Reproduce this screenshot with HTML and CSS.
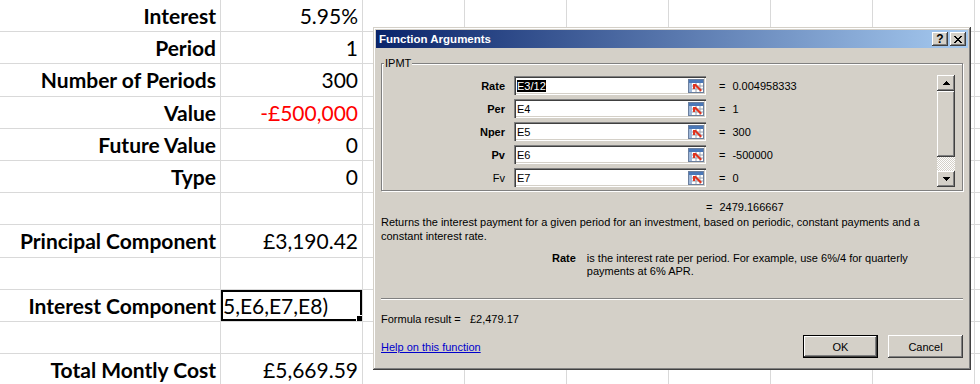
FILE: index.html
```html
<!DOCTYPE html>
<html lang="en">

<head>
  <meta charset="UTF-8">
  <title>IPMT - Function Arguments</title>
  <link rel="stylesheet" href="styles.css">
</head>

<body>
  <!-- Worksheet -->
  <div class="sheet">
    <div class="row"><div class="cell label">Interest</div><div class="cell value">5.95%</div><div class="rest"></div></div>
    <div class="row"><div class="cell label">Period</div><div class="cell value">1</div><div class="rest"></div></div>
    <div class="row"><div class="cell label">Number of Periods</div><div class="cell value">300</div><div class="rest"></div></div>
    <div class="row"><div class="cell label">Value</div><div class="cell value negative">-£500,000</div><div class="rest"></div></div>
    <div class="row"><div class="cell label">Future Value</div><div class="cell value">0</div><div class="rest"></div></div>
    <div class="row"><div class="cell label">Type</div><div class="cell value">0</div><div class="rest"></div></div>
    <div class="row"><div class="cell label"></div><div class="cell value"></div><div class="rest"></div></div>
    <div class="row"><div class="cell label">Principal Component</div><div class="cell value">£3,190.42</div><div class="rest"></div></div>
    <div class="row"><div class="cell label"></div><div class="cell value"></div><div class="rest"></div></div>
    <div class="row"><div class="cell label">Interest Component</div><div class="cell value active"><span class="editing">=IPMT(E3/12,E4,E5,E6,E7,E8)</span></div><div class="rest"></div></div>
    <div class="row"><div class="cell label"></div><div class="cell value"></div><div class="rest"></div></div>
    <div class="row"><div class="cell label">Total Montly Cost</div><div class="cell value">£5,669.59</div><div class="rest"></div></div>
  </div>

  <!-- Function Arguments window -->
  <div class="dialog">
    <div class="titlebar">
      <span class="title">Function Arguments</span>
      <div class="title-btns">
        <span class="tbtn help">?</span>
        <span class="tbtn">
          <svg width="8" height="7" viewBox="0 0 8 7"><path d="M0 0h2v1h1v1h2V1h1V0h2v1H7v1H6v1H5v1h1v1h1v1h1v1H6V6H5V5H3v1H2v1H0V6h1V5h1V4h1V3H2V2H1V1H0z" fill="#000"/></svg>
        </span>
      </div>
    </div>

    <div class="dlg-body">
      <fieldset class="group">
        <legend>IPMT</legend>
        <div class="args">
          <div class="arg-list">
            <div class="arg">
              <span class="arg-name req">Rate</span>
              <div class="field"><span class="field-text"><span class="sel">E3/12</span></span><span class="refbtn"><svg width="16" height="14" viewBox="0 0 16 14"><use href="#ref"/></svg></span></div>
              <span class="eq">=</span><span class="arg-val">0.004958333</span>
            </div>
            <div class="arg">
              <span class="arg-name req">Per</span>
              <div class="field"><span class="field-text">E4</span><span class="refbtn"><svg width="16" height="14" viewBox="0 0 16 14"><use href="#ref"/></svg></span></div>
              <span class="eq">=</span><span class="arg-val">1</span>
            </div>
            <div class="arg">
              <span class="arg-name req">Nper</span>
              <div class="field"><span class="field-text">E5</span><span class="refbtn"><svg width="16" height="14" viewBox="0 0 16 14"><use href="#ref"/></svg></span></div>
              <span class="eq">=</span><span class="arg-val">300</span>
            </div>
            <div class="arg">
              <span class="arg-name req">Pv</span>
              <div class="field"><span class="field-text">E6</span><span class="refbtn"><svg width="16" height="14" viewBox="0 0 16 14"><use href="#ref"/></svg></span></div>
              <span class="eq">=</span><span class="arg-val">-500000</span>
            </div>
            <div class="arg">
              <span class="arg-name">Fv</span>
              <div class="field"><span class="field-text">E7</span><span class="refbtn"><svg width="16" height="14" viewBox="0 0 16 14"><use href="#ref"/></svg></span></div>
              <span class="eq">=</span><span class="arg-val">0</span>
            </div>
          </div>
          <div class="vscroll">
            <span class="sbtn"><svg width="7" height="4" viewBox="0 0 7 4"><path d="M3 0h1v1h1v1h1v1h1v1H0V3h1V2h1V1h1z" fill="#000"/></svg></span>
            <span class="thumb"></span>
            <span class="track"></span>
            <span class="sbtn"><svg width="7" height="4" viewBox="0 0 7 4"><path d="M0 0h7v1H6v1H5v1H4v1H3V3H2V2H1V1H0z" fill="#000"/></svg></span>
          </div>
        </div>
      </fieldset>

      <div class="total"><span class="eq">=</span><span class="arg-val">2479.166667</span></div>

      <p class="desc">Returns the interest payment for a given period for an investment, based on periodic, constant payments and a constant interest rate.</p>

      <div class="argdesc">
        <b>Rate</b>
        <span>is the interest rate per period. For example, use 6%/4 for quarterly payments at 6% APR.</span>
      </div>

      <div class="sep"></div>

      <div class="formula">Formula result =&nbsp;&nbsp; £2,479.17</div>

      <div class="dlg-foot">
        <a href="#" class="help-link">Help on this function</a>
        <div class="dlg-btns">
          <button class="btn default">OK</button>
          <button class="btn">Cancel</button>
        </div>
      </div>
    </div>
  </div>

  <!-- collapse-dialog icon used by every argument box -->
  <svg width="0" height="0" class="defs">
    <defs>
      <g id="ref">
        <rect x="0.5" y="0.5" width="15" height="13" fill="#fff" stroke="#6b7f9e"/>
        <rect x="1" y="1" width="14" height="3" fill="#4a78b8"/>
        <rect x="1" y="4" width="3" height="9" fill="#9fb8da"/>
        <path d="M4 7h11M4 10h11M8 4v9M12 4v9" stroke="#9aa3b0" stroke-width="1"/>
        <path d="M8 5l6 6-1.5 1.5L7 7v3H5V5h3z" fill="#e0321e"/>
      </g>
    </defs>
  </svg>
</body>

</html>
```

FILE: styles.css
```css
/* Page */
body {
  margin: 0;
  background: #fff;
  overflow: hidden;
  width: 980px;
  height: 384px;
  position: relative;
}

/* Worksheet (160% zoom, Calibri-like) */
.sheet {
  font-family: 'Lato', 'Liberation Sans', sans-serif;
  font-size: 21px;
  color: #000;
}

.row {
  display: flex;
  height: 32.2px;
  box-sizing: border-box;
  border-bottom: 1px solid #d9d9d9;
}

.cell {
  box-sizing: border-box;
  border-right: 1px solid #d9d9d9;
  line-height: 31px;
  text-align: right;
  white-space: nowrap;
}

.label {
  width: 221px;
  padding-right: 4px;
  font-weight: bold;
}

.value {
  width: 142px;
  padding-right: 4px;
}

.negative {
  color: #ff0000;
}

.rest {
  flex: 1;
  background: repeating-linear-gradient(to right, transparent 0 101px, #d9d9d9 101px 102px);
}

/* cell being edited */
.active {
  position: relative;
  display: flex;
  justify-content: flex-end;
  overflow: hidden;
  padding-right: 34px;
  box-shadow: inset 0 0 0 2px #000;
}

.active::after {
  content: "";
  position: absolute;
  right: 0;
  bottom: 0;
  width: 5px;
  height: 5px;
  background: #000;
  border-left: 1px solid #fff;
  border-top: 1px solid #fff;
}

.editing {
  flex-shrink: 0;
}

/* Dialog window */
.dialog {
  position: absolute;
  left: 373px;
  top: 27px;
  width: 598px;
  height: 343px;
  box-sizing: border-box;
  padding: 3px;
  background: #d4d0c8;
  box-shadow: inset -1px -1px #404040, inset 1px 1px #d4d0c8, inset -2px -2px #808080, inset 2px 2px #fff;
  font-family: 'Liberation Sans', Arial, sans-serif;
  font-size: 11px;
  color: #000;
  display: flex;
  flex-direction: column;
}

.titlebar {
  height: 18px;
  display: flex;
  align-items: center;
  justify-content: space-between;
  padding: 0 2px 0 3px;
  background: linear-gradient(to right, #0a246a, #a6caf0);
}

.title {
  color: #fff;
  font-weight: bold;
  font-size: 11.5px;
}

.title-btns {
  display: flex;
  gap: 2px;
}

.tbtn {
  width: 16px;
  height: 14px;
  box-sizing: border-box;
  background: #d4d0c8;
  box-shadow: inset -1px -1px #404040, inset 1px 1px #fff, inset -2px -2px #808080;
  display: flex;
  align-items: center;
  justify-content: center;
  font-weight: bold;
  font-size: 12px;
  line-height: 14px;
}

.dlg-body {
  flex: 1;
  display: flex;
  flex-direction: column;
  padding: 9px 5px 0 5px;
}

/* IPMT group box */
.group {
  margin: 0;
  padding: 6px 7px 3px 0;
  border: 1px solid #808080;
  box-shadow: inset 1px 1px #fff, 1px 1px #fff;
}

.group legend {
  padding: 0 1px;
  margin-left: 2px;
  line-height: 13px;
  background: #d4d0c8;
}

.args {
  display: flex;
}

.arg-list {
  flex: 1;
  display: flex;
  flex-direction: column;
  gap: 4px;
}

.arg {
  display: flex;
  align-items: center;
  height: 19px;
}

.arg-name {
  width: 123px;
  text-align: right;
  margin-right: 9px;
}

.req {
  font-weight: bold;
}

.field {
  width: 192px;
  height: 19px;
  box-sizing: border-box;
  background: #fff;
  box-shadow: inset 1px 1px #808080, inset 2px 2px #404040, inset -1px -1px #fff, inset -2px -2px #d4d0c8;
  display: flex;
  align-items: center;
  padding: 2px 2px 2px 3px;
}

.field-text {
  flex: 1;
}

.sel {
  background: #000;
  color: #fff;
}

.refbtn {
  display: flex;
}

.eq {
  margin: 0 7px 0 13px;
}

.vscroll {
  width: 18px;
  margin-top: -1px;
  display: flex;
  flex-direction: column;
}

.sbtn {
  height: 16px;
  background: #d4d0c8;
  box-shadow: inset -1px -1px #404040, inset 1px 1px #fff, inset -2px -2px #808080;
  display: flex;
  align-items: center;
  justify-content: center;
}

.thumb {
  height: 66px;
  background: #d4d0c8;
  box-shadow: inset -1px -1px #404040, inset 1px 1px #fff, inset -2px -2px #808080;
}

.track {
  height: 14px;
  background: repeating-conic-gradient(#fff 0 25%, #d4d0c8 0 50%) 0 0 / 2px 2px;
}

/* Result and help texts */
.total {
  display: flex;
  margin: 9px 0 0 325px;
  line-height: 14px;
}

.total .eq {
  margin-left: 0;
}

.desc {
  margin: 1px 0 0 0;
  line-height: 14px;
  width: 560px;
}

.argdesc {
  display: flex;
  margin: 9px 0 0 171px;
  line-height: 13px;
}

.argdesc b {
  margin-right: 11px;
}

.argdesc span {
  width: 330px;
}

.sep {
  margin-top: auto;
  height: 1px;
  background: #808080;
  border-bottom: 1px solid #fff;
}

.formula {
  margin-top: 12px;
  line-height: 14px;
}

.dlg-foot {
  display: flex;
  justify-content: space-between;
  align-items: center;
  margin: 9px 0 9px 0;
}

.help-link {
  color: #0000cc;
  text-decoration: underline;
}

.dlg-btns {
  display: flex;
  gap: 10px;
}

.btn {
  width: 75px;
  height: 23px;
  padding: 0;
  border: none;
  background: #d4d0c8;
  font-family: inherit;
  font-size: 11px;
  color: #000;
  box-shadow: inset -1px -1px #404040, inset 1px 1px #fff, inset -2px -2px #808080;
}

.btn.default {
  box-shadow: inset 0 0 0 1px #000, inset -2px -2px #404040, inset 2px 2px #fff, inset -3px -3px #808080;
}

.defs {
  position: absolute;
}
```
